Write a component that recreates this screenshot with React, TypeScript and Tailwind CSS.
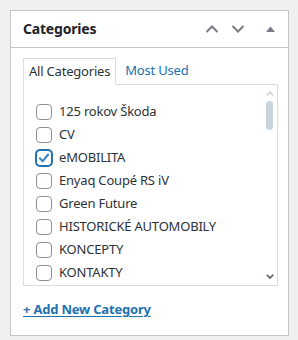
import React from "react";

const cats = [
  { name: "125 rokov Škoda", checked: false },
  { name: "CV", checked: false },
  { name: "eMOBILITA", checked: true },
  { name: "Enyaq Coupé RS iV", checked: false },
  { name: "Green Future", checked: false },
  { name: "HISTORICKÉ AUTOMOBILY", checked: false },
  { name: "KONCEPTY", checked: false },
  { name: "KONTAKTY", checked: false },
];

function Box({ checked }: { checked: boolean }) {
  return (
    <span
      className={
        "relative flex h-[16px] w-[16px] shrink-0 items-center justify-center rounded-[4px] border bg-white " +
        (checked ? "border-[#2271b1] shadow-[0_0_0_1px_#2271b1]" : "border-[#8c8f94]")
      }
    >
      {checked && (
        <svg width="14" height="14" viewBox="0 0 20 20" className="absolute">
          <path d="M4 10.5 L8.2 14.5 L16 5" fill="none" stroke="#3582c4" strokeWidth="3" strokeLinecap="round" strokeLinejoin="round" />
        </svg>
      )}
    </span>
  );
}

export default function App() {
  return (
    <div
      className="h-[340px] w-[298px] bg-[#f0f0f1] pl-[10px] pt-[10px]"
      style={{ fontFamily: '"Noto Sans", "Open Sans", sans-serif' }}
    >
      <div className="flex h-[326px] w-[279px] flex-col border border-[#c3c4c7] bg-white">
        <div className="flex h-[37px] shrink-0 items-center border-b border-[#c3c4c7] pl-[12px] pr-[12px]">
          <span className="text-[14px] font-bold leading-none tracking-[-0.2px] text-[#1d2327]">Categories</span>
          <div className="ml-auto flex items-center">
            <svg width="14" height="10" viewBox="0 0 14 10" className="mr-[12px]">
              <path d="M1.5 8 L7 2.5 L12.5 8" fill="none" stroke="#787c82" strokeWidth="2" />
            </svg>
            <svg width="14" height="10" viewBox="0 0 14 10" className="mr-[21px]">
              <path d="M1.5 2 L7 7.5 L12.5 2" fill="none" stroke="#787c82" strokeWidth="2" />
            </svg>
            <svg width="9" height="6" viewBox="0 0 9 6" className="mr-[1px]">
              <path d="M0 6 L4.5 0.5 L9 6 Z" fill="#787c82" />
            </svg>
          </div>
        </div>
        <div className="flex flex-col px-[12px] pt-[10px]">
          <div className="flex items-end text-[13px] tracking-[-0.2px]">
            <div className="relative z-10 -mb-px flex h-[27px] items-center border border-b-white border-[#dcdcde] bg-white px-[5px] text-[#2c3338]">
              All Categories
            </div>
            <div className="flex h-[26px] items-center px-[9px] text-[#2271b1]">Most Used</div>
          </div>
          <div className="relative h-[202px] w-[255px] border border-[#dcdcde] bg-white">
            <div className="flex flex-col pl-[12px] pt-[15px]">
              {cats.map((c) => (
                <div key={c.name} className="flex h-[23px] items-center gap-[7px]">
                  <Box checked={c.checked} />
                  <span className="whitespace-nowrap text-[13px] tracking-[-0.2px] text-[#2c3338]">{c.name}</span>
                </div>
              ))}
            </div>
            <div className="absolute right-0 top-0 flex h-full w-[14px] flex-col items-center bg-white">
              <svg width="8" height="5" viewBox="0 0 8 5" className="mt-[6px]">
                <path d="M0.8 4.2 L4 1 L7.2 4.2" fill="none" stroke="#c5ced8" strokeWidth="1.4" />
              </svg>
              <div className="mr-[1px] mt-[5px] h-[29px] w-[7px] rounded-full bg-[#c9d4df]" />
              <svg width="8" height="5" viewBox="0 0 8 5" className="mt-auto mb-[6px]">
                <path d="M0.8 0.8 L4 4 L7.2 0.8" fill="none" stroke="#50575e" strokeWidth="1.6" />
              </svg>
            </div>
          </div>
          <div className="mt-[10px]">
            <span className="text-[13px] font-bold tracking-[-0.2px] text-[#2271b1] underline underline-offset-2">+ Add New Category</span>
          </div>
        </div>
      </div>
    </div>
  );
}
